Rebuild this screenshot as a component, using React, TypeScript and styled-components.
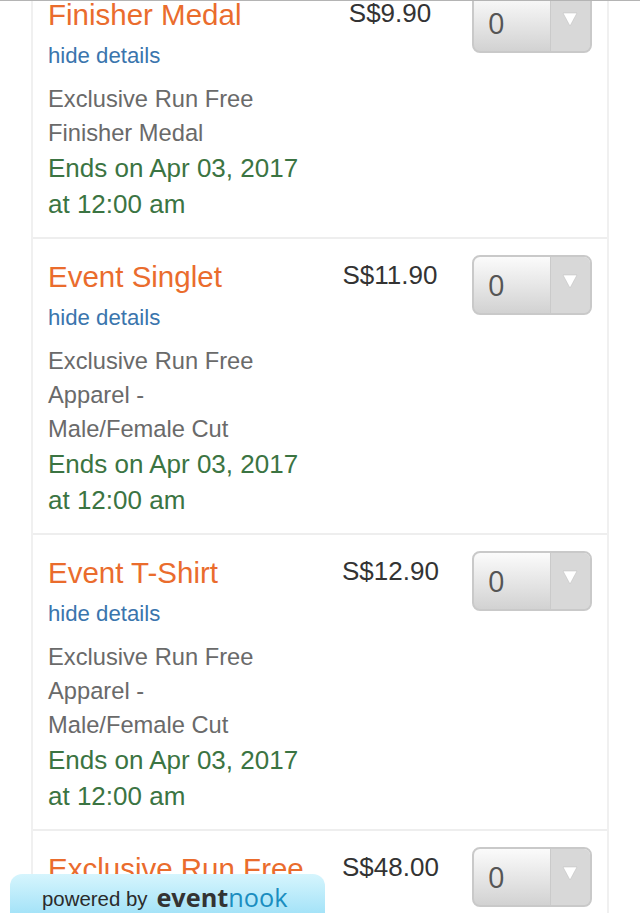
import { createGlobalStyle } from "styled-components";
import styled from "styled-components";

const GlobalStyle = createGlobalStyle`
  html, body {
    margin: 0;
    padding: 0;
    height: 913px;
    overflow: hidden;
    background: #fff;
    font-family: "Liberation Sans", Arial, sans-serif;
  }
`;

const tickets = [
  { name: "Finisher Medal", price: "S$9.90", details: ["Exclusive Run Free", "Finisher Medal"] },
  { name: "Event Singlet", price: "S$11.90", details: ["Exclusive Run Free", "Apparel -", "Male/Female Cut"] },
  { name: "Event T-Shirt", price: "S$12.90", details: ["Exclusive Run Free", "Apparel -", "Male/Female Cut"] },
];

const App = () => {
  return (
    <>
      <GlobalStyle />
      <TopLine />
      <List>
        {tickets.map((t) => (
          <Row key={t.name}>
            <Info>
              <Title>{t.name}</Title>
              <HideLink href="#">hide details</HideLink>
              <Details>
                {t.details.map((d) => (
                  <div key={d}>{d}</div>
                ))}
              </Details>
              <Ends>
                Ends on Apr 03, 2017
                <br />
                at 12:00 am
              </Ends>
            </Info>
            <Price>{t.price}</Price>
            <QtySelect />
          </Row>
        ))}
        <Row>
          <Info>
            <Title>Exclusive Run Free</Title>
          </Info>
          <Price>S$48.00</Price>
          <QtySelect />
        </Row>
      </List>
      <Powered>
        powered by
        <Logo>
          <b>event</b>nook
        </Logo>
      </Powered>
    </>
  );
};

const QtySelect = () => (
  <Select>
    <SelectValue>0</SelectValue>
    <SelectArrow>
      <svg width="16" height="15" viewBox="0 0 16 15">
        <path d="M1 1h14L8 14z" fill="#fff" stroke="#bcbcbc" strokeWidth="0.5" />
      </svg>
    </SelectArrow>
  </Select>
);

export default App;

//STYLED

const TopLine = styled.div`
  position: absolute;
  top: 0;
  left: 0;
  right: 0;
  height: 1px;
  background: #b4b4b4;
  z-index: 2;
`;

const List = styled.div`
  width: 574px;
  margin: -23px 0 0 31px;
  border-left: 2px solid #f0f0f0;
  border-right: 2px solid #f0f0f0;
`;

const Row = styled.div`
  display: grid;
  grid-template-columns: 294px 96px 1fr;
  padding: 18px 15px 15px 15px;
  border-bottom: 2px solid #eeeeee;
  box-sizing: border-box;
`;

const Info = styled.div`
  display: flex;
  flex-direction: column;
  align-items: flex-start;
`;

const Title = styled.div`
  font-size: 29.5px;
  line-height: 42px;
  margin-top: -1px;
  margin-bottom: 1px;
  color: #ea6c2d;
  white-space: nowrap;
`;

const HideLink = styled.a`
  font-size: 22.2px;
  line-height: 36px;
  margin-top: 1px;
  color: #3a75ad;
  text-decoration: none;
`;

const Details = styled.div`
  margin-top: 8px;
  font-size: 23.7px;
  line-height: 34px;
  color: #6a6a6a;
`;

const Ends = styled.div`
  font-size: 26px;
  line-height: 36px;
  color: #3b7442;
`;

const Price = styled.div`
  margin-top: -2px;
  font-size: 26px;
  line-height: 40px;
  color: #333333;
  text-align: center;
  white-space: nowrap;
`;

const Select = styled.div`
  display: flex;
  justify-self: end;
  width: 120px;
  height: 60px;
  margin-top: -2px;
  box-sizing: border-box;
  border: 2px solid #c9c9c9;
  border-radius: 8px;
  background: linear-gradient(#fbfbfb, #d2d2d2);
  overflow: hidden;
`;

const SelectValue = styled.div`
  flex: 1;
  padding-left: 14px;
  font-size: 29px;
  line-height: 55px;
  color: #555555;
  font-family: "Open Sans", "Liberation Sans", sans-serif;
`;

const SelectArrow = styled.div`
  width: 40px;
  display: flex;
  align-items: flex-start;
  justify-content: center;
  padding: 17px 2px 0 0;
  box-sizing: border-box;
  background: #d8d8d8;
  border-left: 1px solid #cacaca;
`;

const Powered = styled.div`
  position: absolute;
  left: 10px;
  top: 874px;
  width: 315px;
  height: 39px;
  box-sizing: border-box;
  border-radius: 12px 12px 0 0;
  background: linear-gradient(#d6f5fd, #a5e3f8);
  padding: 11px 0 0 32px;
  display: flex;
  align-items: center;
  gap: 9px;
  font-size: 20.4px;
  color: #2b2b2b;
  z-index: 3;
`;

const Logo = styled.span`
  font-family: "Open Sans", sans-serif;
  font-size: 25.3px;
  color: #1a8dc0;
  line-height: 24px;
  margin-top: -4px;

  b {
    color: #333333;
    font-weight: 700;
  }
`;
